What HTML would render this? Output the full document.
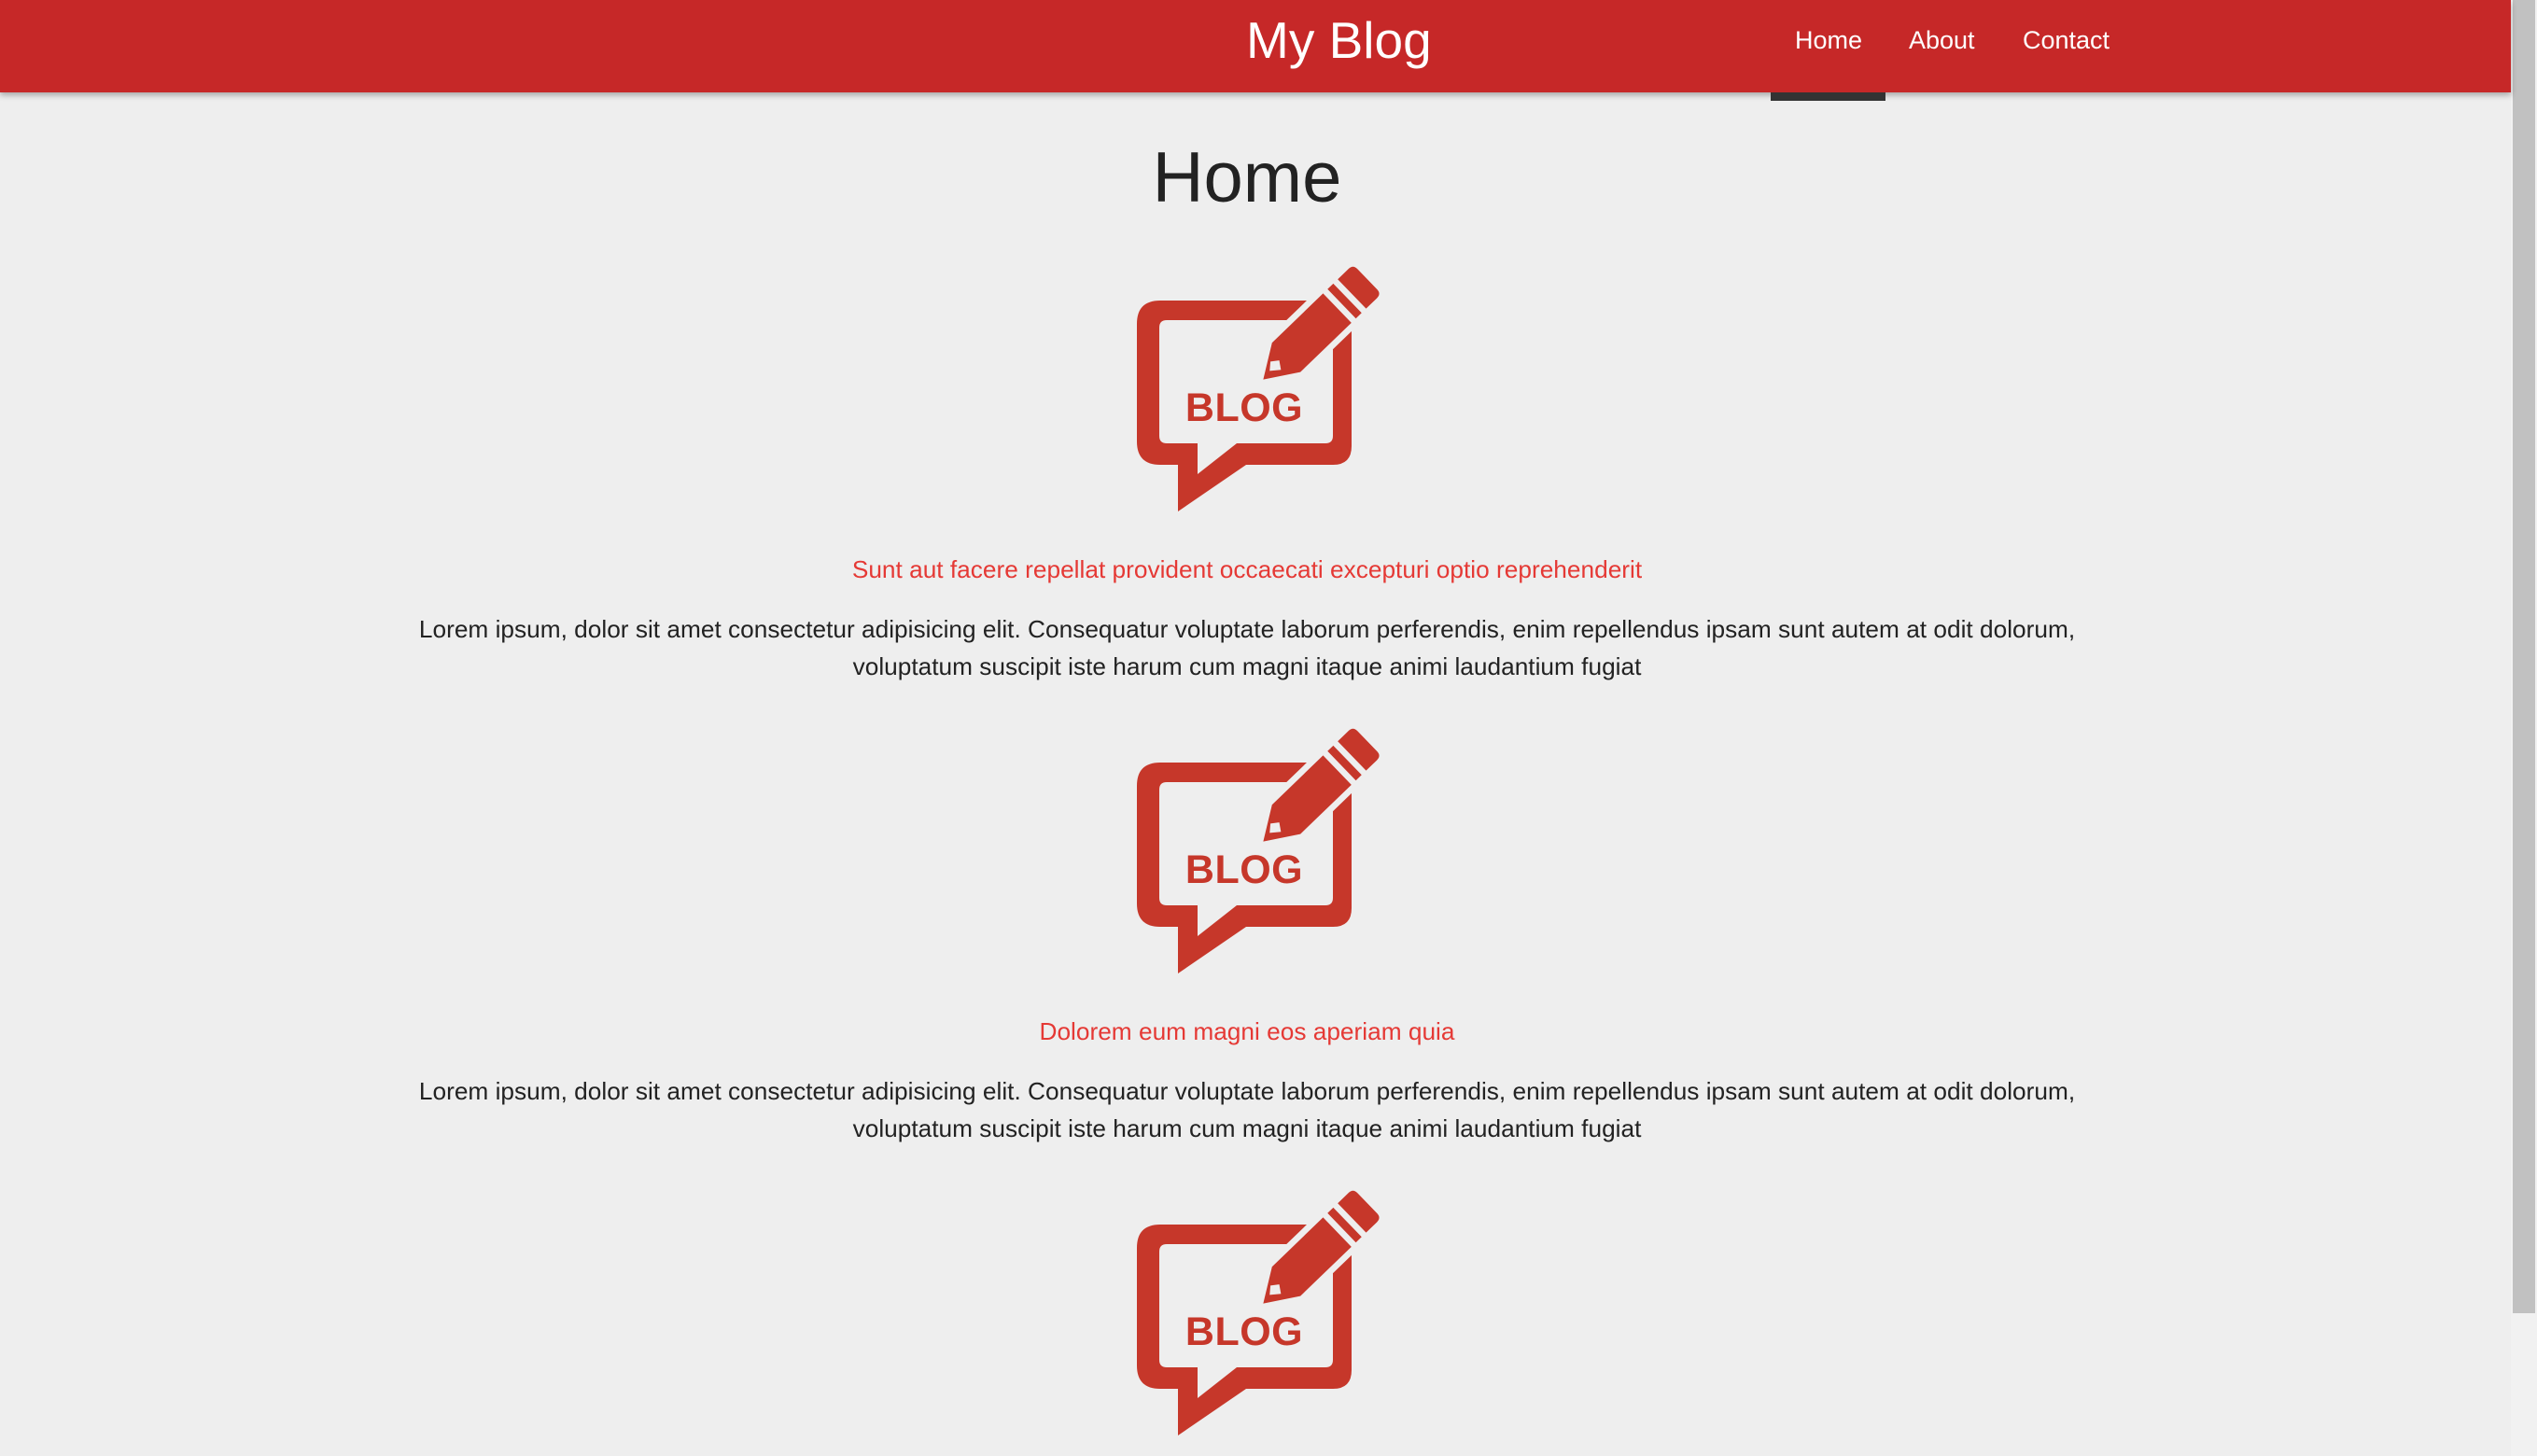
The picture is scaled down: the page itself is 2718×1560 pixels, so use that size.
<!DOCTYPE html>
<html><head><meta charset="utf-8"><style>
*{margin:0;padding:0;box-sizing:border-box}
html,body{width:2718px;height:1560px;overflow:hidden;background:#eeeeee;font-family:"Liberation Sans",Arial,sans-serif}
.hdr{position:absolute;left:0;top:0;width:2690px;height:99px;background:#c62828;box-shadow:0 3px 6px rgba(0,0,0,.3);z-index:2}
.brand{position:absolute;left:1335px;top:8px;color:#fff;font-size:55px;line-height:70px}
.nav{position:absolute;top:26px;color:#fff;font-size:27px;line-height:34px}
.bar{position:absolute;left:1897px;top:99px;width:123px;height:9px;background:#333;z-index:3}
.sb{position:absolute;left:2690px;top:0;width:28px;height:1560px;background:#f1f1f1}
.th{position:absolute;left:2px;top:0;width:24px;height:1407px;background:#c1c1c1}
h1{position:absolute;left:0;width:2672px;top:146px;text-align:center;font-weight:normal;font-size:76px;line-height:90px;color:#222}
.logo{position:absolute;left:1200px;width:300px;height:290px}
.t{position:absolute;left:0;width:2672px;text-align:center;color:#e53935;font-size:26.25px;line-height:40px;white-space:nowrap}
.p{position:absolute;left:0;width:2672px;text-align:center;color:#222;font-size:26.25px;line-height:40px;white-space:nowrap}
</style></head><body>
<div class="hdr">
<div class="brand">My Blog</div>
<div class="nav" style="left:1923px">Home</div>
<div class="nav" style="left:2045px">About</div>
<div class="nav" style="left:2167px">Contact</div>
</div>
<div class="bar"></div>
<div class="sb"><div class="th"></div></div>
<h1>Home</h1>

<svg width="0" height="0" style="position:absolute"><defs>
<g id="lg">
<path fill="#c6372a" fill-rule="evenodd" d="M43,52H228Q248,52 248,72V208Q248,228 228,228H135L62,278V228H43Q18,228 18,203V77Q18,52 43,52Z M50,73H220Q228,73 228,81V197Q228,205 220,205H125L83,238V205H50Q42,205 42,197V81Q42,73 50,73Z"/>
<g transform="translate(152,138) rotate(-44) scale(0.95)">
<path fill="#eeeeee" stroke="#eeeeee" stroke-width="14" stroke-linejoin="round" d="M0,0L38,-23H160Q166,-23 166,-17V17Q166,23 160,23H38Z"/>
<path fill="#c6372a" d="M2,0L38,-23H118V23H38Z"/>
<path fill="#eeeeee" d="M14,-2L22,-9L30,-3L24,6Z"/>
<rect fill="#c6372a" x="125" y="-23" width="9" height="46"/>
<path fill="#c6372a" d="M141,-23H158Q165,-23 165,-16V16Q165,23 158,23H141Z"/>
</g>
<text x="133" y="181" text-anchor="middle" font-family="Liberation Sans,Arial,sans-serif" font-weight="bold" font-size="43" fill="#c6372a" letter-spacing="0.5">BLOG</text>
</g></defs></svg>

<svg class="logo" style="top:270px" viewBox="0 0 300 290"><use href="#lg"/></svg>
<div class="t" style="top:590px">Sunt aut facere repellat provident occaecati excepturi optio reprehenderit</div>
<div class="p" style="top:654px">Lorem ipsum, dolor sit amet consectetur adipisicing elit. Consequatur voluptate laborum perferendis, enim repellendus ipsam sunt autem at odit dolorum,<br>voluptatum suscipit iste harum cum magni itaque animi laudantium fugiat</div>

<svg class="logo" style="top:765px" viewBox="0 0 300 290"><use href="#lg"/></svg>
<div class="t" style="top:1085px">Dolorem eum magni eos aperiam quia</div>
<div class="p" style="top:1149px">Lorem ipsum, dolor sit amet consectetur adipisicing elit. Consequatur voluptate laborum perferendis, enim repellendus ipsam sunt autem at odit dolorum,<br>voluptatum suscipit iste harum cum magni itaque animi laudantium fugiat</div>

<svg class="logo" style="top:1260px" viewBox="0 0 300 290"><use href="#lg"/></svg>
</body></html>
